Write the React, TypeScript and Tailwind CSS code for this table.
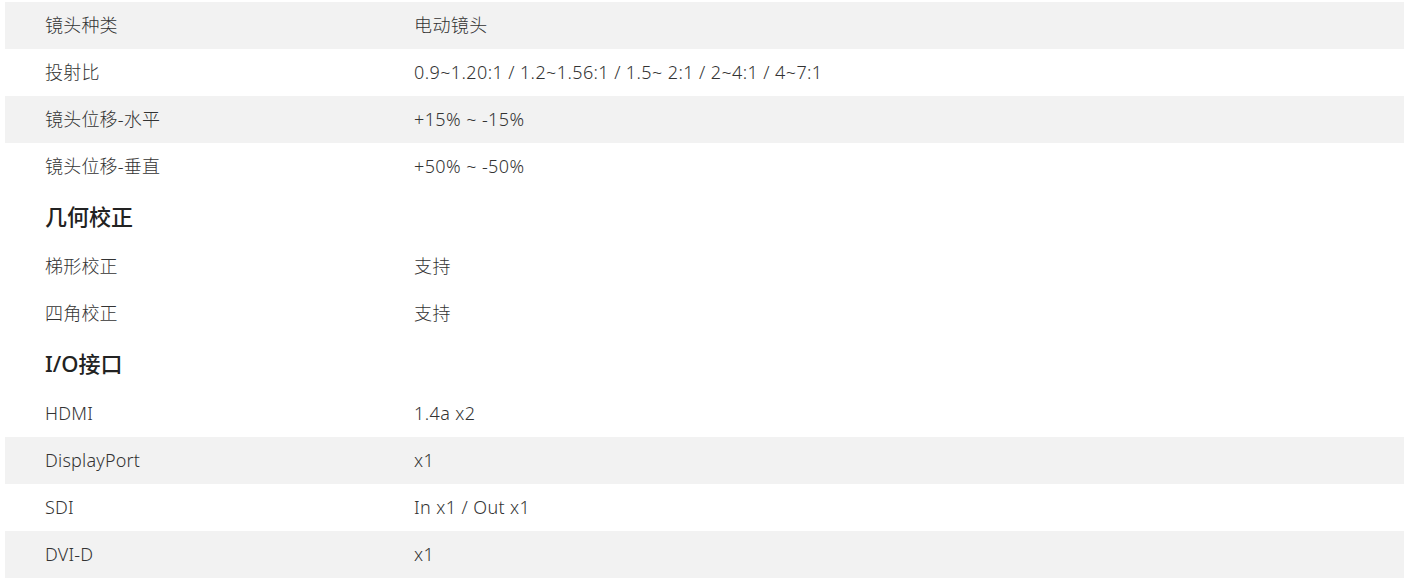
import React from 'react';

type Row = { label: string; value: string; gray?: boolean };
type Section = { title?: string; rows: Row[] };

const sections: Section[] = [
  {
    rows: [
      { label: '镜头种类', value: '电动镜头', gray: true },
      { label: '投射比', value: '0.9~1.20:1 / 1.2~1.56:1 / 1.5~ 2:1 / 2~4:1 / 4~7:1' },
      { label: '镜头位移-水平', value: '+15% ~ -15%', gray: true },
      { label: '镜头位移-垂直', value: '+50% ~ -50%' },
    ],
  },
  {
    title: '几何校正',
    rows: [
      { label: '梯形校正', value: '支持' },
      { label: '四角校正', value: '支持' },
    ],
  },
  {
    title: 'I/O接口',
    rows: [
      { label: 'HDMI', value: '1.4a x2' },
      { label: 'DisplayPort', value: 'x1', gray: true },
      { label: 'SDI', value: 'In x1 / Out x1' },
      { label: 'DVI-D', value: 'x1', gray: true },
    ],
  },
];

const App: React.FC = () => {
  return (
    <div
      className="w-[1407px] h-[580px] bg-white pt-[2px] pl-[5px] pr-[3px] text-[#333] overflow-hidden"
      style={{ fontFamily: '"Noto Sans", "Noto Sans CJK SC", sans-serif' }}
    >
      {sections.map((section, si) => (
        <div key={si}>
          {section.title && (
            <div className="h-[53px] flex items-center pl-[40px] text-[22px] font-medium text-[#222]">
              {section.title}
            </div>
          )}
          {section.rows.map((row) => (
            <div
              key={row.label}
              className={`h-[47px] flex items-center text-[18px] font-light ${row.gray ? 'bg-[#f2f2f2]' : 'bg-white'}`}
            >
              <div className="w-[409px] pl-[40px] shrink-0 tracking-[0.2px]">{row.label}</div>
              <div className="tracking-[0.4px]">{row.value}</div>
            </div>
          ))}
        </div>
      ))}
    </div>
  );
};

export default App;
